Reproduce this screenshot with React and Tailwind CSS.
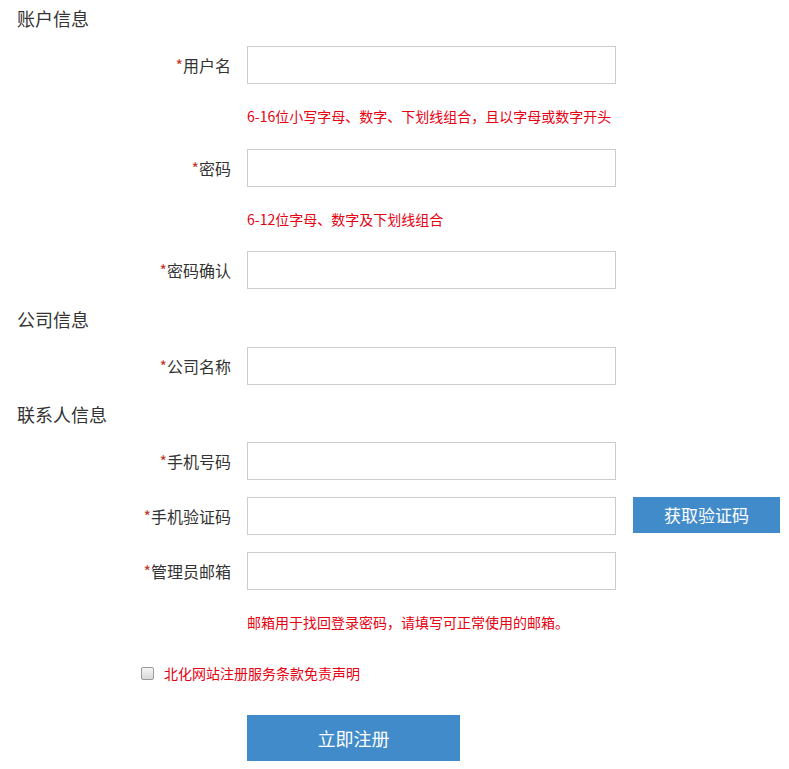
export default function App() {
  const font = { fontFamily: '"Noto Sans CJK SC", "Noto Sans", sans-serif' };
  const Heading = ({ children }) => (
    <div className="h-[36px] leading-[36px] pl-[17px] text-[18px] text-[#333] mb-[10px]">
      {children}
    </div>
  );
  const Row = ({ label, mb = 0, extra = null }) => (
    <div className="flex items-start" style={{ marginBottom: mb }}>
      <div className="w-[231px] h-[38px] flex items-center justify-end text-[16px] text-[#333] shrink-0">
        <span className="text-[#c0392b]">*</span>
        <span>{label}</span>
      </div>
      <div className="ml-[16px] w-[369px] h-[38px] border border-[#cccccc] bg-white shrink-0" />
      {extra}
    </div>
  );
  const Hint = ({ children, h = 65 }) => (
    <div className="flex items-center pl-[247px] text-[14px] text-[#e60012]" style={{ height: h }}>{children}</div>
  );
  return (
    <div className="w-[789px] h-[769px] bg-white overflow-hidden" style={font}>
      <Heading>账户信息</Heading>
      <Row label="用户名" />
      <Hint>6-16位小写字母、数字、下划线组合，且以字母或数字开头</Hint>
      <Row label="密码" />
      <Hint h={64}>6-12位字母、数字及下划线组合</Hint>
      <Row label="密码确认" mb={12} />
      <Heading>公司信息</Heading>
      <Row label="公司名称" mb={11} />
      <Heading>联系人信息</Heading>
      <Row label="手机号码" mb={17} />
      <Row
        label="手机验证码"
        mb={17}
        extra={
          <div className="ml-[17px] w-[147px] h-[36px] bg-[#428bca] text-white text-[17px] flex items-center justify-center shrink-0">
            获取验证码
          </div>
        }
      />
      <Row label="管理员邮箱" />
      <Hint>邮箱用于找回登录密码，请填写可正常使用的邮箱。</Hint>
      <div className="h-[36px] flex items-center pl-[141px]">
        <span className="w-[13px] h-[13px] rounded-[2px] border border-[#9a9a9a] bg-gradient-to-b from-[#f6f6f6] to-[#d8d8d8] shrink-0" />
        <span className="ml-[10px] text-[14px] text-[#e60012]">北化网站注册服务条款免责声明</span>
      </div>
      <div className="pl-[247px] mt-[24px]">
        <div className="w-[213px] h-[46px] bg-[#428bca] text-white text-[18px] flex items-center justify-center">
          立即注册
        </div>
      </div>
    </div>
  );
}
